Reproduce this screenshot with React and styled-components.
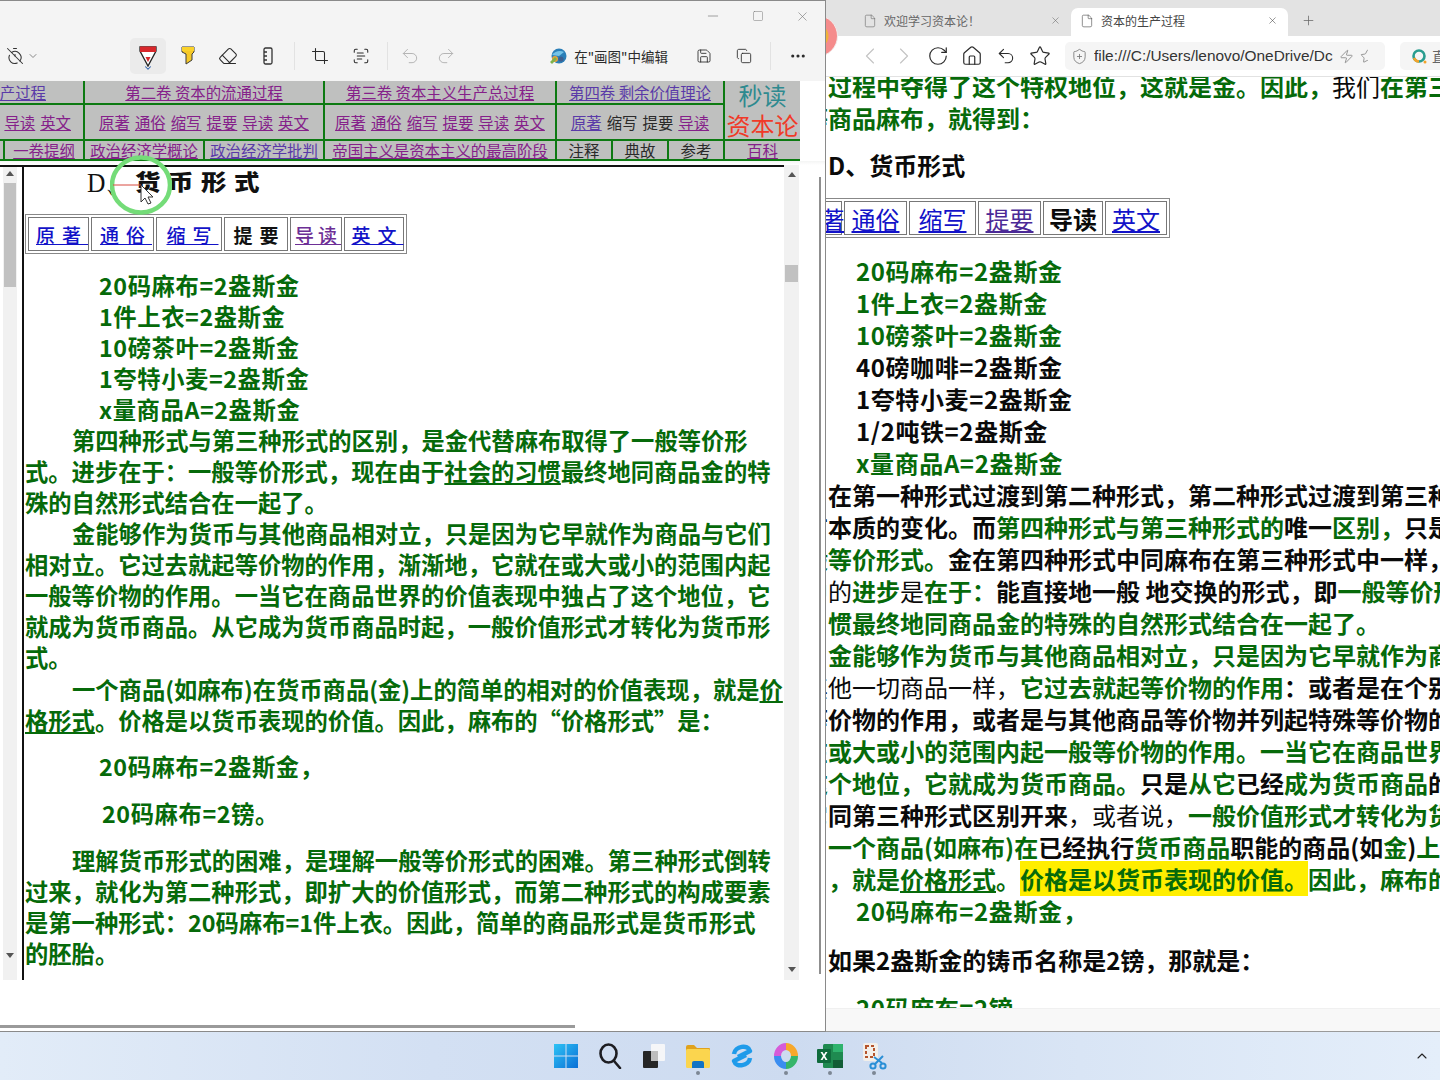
import React from "react"
import styled, { createGlobalStyle } from "styled-components"
import {
  TimerOff,
  ChevronDown,
  ChevronUp,
  ChevronLeft,
  ChevronRight,
  Eraser,
  Crop,
  ScanText,
  Undo2,
  Redo2,
  Save,
  Copy,
  Ellipsis,
  Minus,
  Square,
  X,
  File,
  Plus,
  RotateCw,
  House,
  Star,
  ShieldPlus,
  Zap,
  StarHalf,
} from "lucide-react"

const CJK = `"Noto Sans CJK SC", "Noto Sans", sans-serif`
const GREEN = "#066a0a"

const GlobalStyle = createGlobalStyle`
  html, body {
    margin: 0;
    padding: 0;
    background: #ffffff;
    overflow: hidden;
    font-family: ${CJK};
  }
`

const Desktop = styled.div`
  width: 1440px;
  height: 1080px;
  display: flex;
  flex-direction: column;
  overflow: hidden;
`

const Workspace = styled.div`
  height: 1032px;
  display: flex;
  flex: none;
`

/* snipping window on the left */
const SnipWindow = styled.section`
  position: relative;
  width: 826px;
  flex: none;
  display: flex;
  flex-direction: column;
  box-sizing: border-box;
  background: #ffffff;
  border-top: 1px solid #8a8a8a;
  border-right: 1px solid #8a8a8a;
  border-bottom: 1px solid #8a8a8a;
  z-index: 2;
`

const TitleBar = styled.header`
  height: 80px;
  flex: none;
  display: flex;
  flex-direction: column;
  background: #f4f4f4;
`

const CaptionRow = styled.div`
  height: 30px;
  display: flex;
  justify-content: flex-end;
  align-items: center;
  color: #777777;
`

const CaptionButton = styled.div`
  width: 45px;
  display: flex;
  justify-content: center;
  align-items: center;
`

const ToolRow = styled.div`
  height: 50px;
  display: flex;
  align-items: center;
  padding-right: 7px;
  color: #333333;
`

const TimerGroup = styled.div`
  width: 128px;
  flex: none;
  display: flex;
  align-items: center;
  gap: 3px;
  padding-left: 6px;
  box-sizing: border-box;
  color: #333;
`

const ToolSlot = styled.div`
  width: ${p => p.$w || 40}px;
  height: 36px;
  flex: none;
  position: relative;
  display: flex;
  align-items: center;
  justify-content: center;
  border-radius: 5px;
  margin-left: ${p => p.$ml || 0}px;
  background: ${p => (p.$active ? "#ebebeb" : "transparent")};
  color: ${p => (p.$muted ? "#b5b5b5" : "#2b2b2b")};
`

const ActiveMark = styled.div`
  position: absolute;
  bottom: 1px;
  left: 50%;
  margin-left: -5px;
  color: #2a5ca8;
  display: flex;
`

const ToolSep = styled.div`
  width: 1px;
  height: 28px;
  flex: none;
  margin-left: ${p => p.$ml || 6}px;
  background: #e2e2e2;
`

const EditInPaint = styled.div`
  margin-left: auto;
  display: flex;
  align-items: center;
  gap: 7px;
  font-size: 13.5px;
  color: #2b2b2b;
  white-space: nowrap;
`

const NavGrid = styled.nav`
  width: 800px;
  flex: none;
  display: grid;
  grid-template-columns: 3px 78px 118px 118px 230px 54px 54px 54px 75px;
  grid-template-rows: 22px 34px 18px;
  gap: 2px;
  padding-bottom: 2px;
  background: #0d7a12;
  overflow: hidden;
`

const NavCell = styled.div`
  grid-column: span ${p => p.$span || 1};
  background: #bfc0bf;
  display: flex;
  align-items: center;
  justify-content: ${p => p.$justify || "center"};
  padding-right: ${p => p.$pr || 0}px;
  gap: 5px;
  font-size: 15.4px;
  line-height: 18px;
  white-space: nowrap;
  overflow: hidden;
`

const BrandCell = styled(NavCell)`
  grid-row: span 2;
  flex-direction: column;
  gap: 2px;
`

const NavLink = styled.a`
  color: ${p => p.$color || "#85208a"};
  text-decoration: underline;
`

const NavPlain = styled.span`
  color: #2a2a2a;
`

const BrandText = styled.span`
  font-size: 24px;
  line-height: 28px;
  color: ${p => p.$color};
`

const FrameTop = styled.div`
  height: 4px;
  flex: none;
  background: linear-gradient(#f4f5f4, #ffffff);
`

const Frames = styled.div`
  width: 100%;
  height: 815px;
  flex: none;
  display: flex;
  position: relative;
`

const SideFrame = styled.div`
  width: 22px;
  flex: none;
  padding-left: 3px;
  box-sizing: border-box;
  border-top: 2px solid #111;
`

const ScrollTrack = styled.div`
  width: ${p => p.$w || 14}px;
  flex: none;
  height: 100%;
  background: #f1f1f1;
  display: flex;
  flex-direction: column;
  align-items: center;
`

const ArrowUp = styled.div`
  width: 0;
  height: 0;
  flex: none;
  margin-top: ${p => p.$mt}px;
  border-left: 4px solid transparent;
  border-right: 4px solid transparent;
  border-bottom: 5px solid #555;
`

const ArrowDown = styled(ArrowUp)`
  margin-top: ${p => p.$mt}px;
  border-bottom: 0;
  border-top: 5px solid #555;
`

const ScrollThumb = styled.div`
  width: ${p => p.$w || 12}px;
  height: ${p => p.$h}px;
  flex: none;
  margin-top: ${p => p.$mt}px;
  background: #c1c1c1;
`

const ReaderFrame = styled.article`
  flex: 1;
  min-width: 0;
  box-sizing: border-box;
  border-top: 2px solid #111;
  border-left: 2px solid #111;
  padding-left: 1px;
  overflow: hidden;
`

const FrameHeading = styled.h3`
  margin: 0 0 15px;
  padding-left: 62px;
  height: 32px;
  display: flex;
  align-items: center;
  color: #111;
  font-size: 25.5px;
  font-weight: 900;
  line-height: 30px;
`

const HeadingLatin = styled.span`
  font-family: "Liberation Serif", serif;
  font-weight: 400;
  width: 48px;
  flex: none;
  transform: scaleY(1.1);
`

const HeadingCjk = styled.span`
  letter-spacing: 7.5px;
  transform: translateY(-2px) scaleY(0.84);
`

const TabBox = styled.div`
  display: flex;
  width: fit-content;
  gap: 2px;
  padding: 2px;
  border: 1px solid #888;
  margin-left: ${p => p.$ml || 0}px;
`

const Tab = styled.div`
  width: ${p => p.$w}px;
  height: ${p => p.$h}px;
  flex: none;
  box-sizing: border-box;
  border: 1px solid #777;
  padding-left: ${p => p.$track || 0}px;
  display: flex;
  align-items: center;
  justify-content: center;
  white-space: nowrap;
  font-size: ${p => p.$size}px;
  letter-spacing: ${p => p.$track || 0}px;
  color: ${p => p.$color || "#1212c8"};
  text-decoration: ${p => (p.$current ? "none" : "underline")};
  font-weight: ${p => (p.$current ? 700 : p.$weight || 400)};
`

const TextLine = styled.p`
  margin: ${p => p.$mt || 0}px 0 0 ${p => p.$indent || 0}px;
  height: ${p => p.$lh}px;
  line-height: ${p => p.$lh}px;
  font-size: ${p => p.$size}px;
  font-weight: 700;
  white-space: nowrap;
  letter-spacing: ${p => p.$track || 0}px;
  color: ${p => p.$color || GREEN};
`

const Tone = styled.span`
  color: ${p => (p.$tone === "green" ? GREEN : "#0a0a0a")};
  font-weight: ${p => (p.$tone === "plain" ? 400 : 700)};
`

const Under = styled.span`
  text-decoration: underline;
`

const Mark = styled.span`
  background: #ffee00;
`

const OuterGutter = styled.div`
  width: 26px;
  flex: none;
  padding: 12px 0 0 20px;
  box-sizing: border-box;
`

const OuterThumb = styled.div`
  width: 2px;
  height: 797px;
  background: #8f8f8f;
`

const SnipFooter = styled.div`
  flex: 1;
  display: flex;
  align-items: flex-end;
  padding-bottom: 3px;
`

const FooterBar = styled.div`
  width: 575px;
  height: 3px;
  background: #9a9a9a;
`

const CursorMark = styled.div`
  position: absolute;
  left: 110px;
  top: 154px;
  width: 62px;
  height: 60px;
`

/* browser on the right */
const Browser = styled.section`
  flex: 1;
  min-width: 0;
  position: relative;
  display: flex;
  flex-direction: column;
  background: #fff;
  overflow: hidden;
`

const Avatar = styled.div`
  position: absolute;
  left: -30px;
  top: 15px;
  width: 42px;
  height: 42px;
  box-sizing: border-box;
  border-radius: 50%;
  background: radial-gradient(circle at 50% 50%, #f0b23a 0 11px, #f58b8b 12px);
  border: 1px solid #f2e8e8;
  z-index: 3;
`

const TabStrip = styled.div`
  height: 36px;
  flex: none;
  background: #e3e3e3;
  display: flex;
  align-items: flex-end;
  padding-left: 28px;
`

const BrowserTab = styled.div`
  width: ${p => p.$w}px;
  height: 28px;
  flex: none;
  box-sizing: border-box;
  padding: 0 10px 3px 9px;
  display: flex;
  align-items: center;
  gap: 7px;
  font-size: 12px;
  color: ${p => (p.$active ? "#444" : "#666")};
  background: ${p => (p.$active ? "#ffffff" : "transparent")};
  border-radius: 7px 7px 0 0;
`

const TabTitle = styled.span`
  flex: 1;
  white-space: nowrap;
`

const NewTab = styled.div`
  width: 40px;
  height: 28px;
  display: flex;
  align-items: center;
  justify-content: center;
  padding-bottom: 3px;
  box-sizing: border-box;
  color: #666;
`

const NavBar = styled.div`
  height: 41px;
  flex: none;
  box-sizing: border-box;
  border-bottom: 1px solid #e2e2e2;
  display: flex;
  align-items: center;
  padding-left: 27px;
  color: #333;
  position: relative;
  background: #fff;
  z-index: 1;
`

const NavIcon = styled.div`
  width: 34px;
  flex: none;
  display: flex;
  justify-content: center;
  color: ${p => (p.$muted ? "#c4c4c4" : "#2b2b2b")};
`

const AddressBox = styled.div`
  width: 320px;
  height: 28px;
  margin-left: 8px;
  flex: none;
  box-sizing: border-box;
  background: #f5f5f5;
  border-radius: 5px;
  display: flex;
  align-items: center;
  padding: 0 6px 0 6px;
  gap: 6px;
  color: #777;
`

const UrlText = styled.div`
  width: 239px;
  overflow: hidden;
  white-space: nowrap;
  font-family: "Liberation Sans", sans-serif;
  font-size: 15.4px;
  color: #333;
  flex: none;
`

const SearchBox = styled.div`
  flex: 1;
  height: 28px;
  margin-left: 15px;
  background: #f5f5f5;
  border-radius: 5px 0 0 5px;
  display: flex;
  align-items: center;
  gap: 5px;
  padding-left: 11px;
  font-size: 14px;
  color: #666;
  overflow: hidden;
  white-space: nowrap;
`

const Page = styled.main`
  flex: 1;
  min-height: 0;
  padding-left: 2px;
  overflow: hidden;
`

const StatusBar = styled.div`
  height: 24px;
  flex: none;
  background: #f8f8f8;
  border-top: 1px solid #f0f0f0;
  border-bottom: 1px solid #9a9a9a;
  box-sizing: border-box;
`

const PageLines = styled.div`
  margin-top: -7px;
`

const PageHeading = styled.h3`
  margin: 15px 0 17px 0;
  height: 32px;
  line-height: 32px;
  font-size: 24px;
  font-weight: 700;
  color: #0a0a0a;
`

/* taskbar */
const Taskbar = styled.footer`
  height: 48px;
  flex: none;
  display: flex;
  align-items: center;
  padding-left: 544px;
  padding-right: 10px;
  background: linear-gradient(90deg, #e2ecf8 0%, #d3e0f3 30%, #cddbf0 55%, #d9e5f5 75%, #e4eefa 100%);
`

const TaskSlot = styled.div`
  position: relative;
  width: 44px;
  height: 48px;
  flex: none;
  display: flex;
  align-items: center;
  justify-content: center;
  &::after {
    content: "";
    display: ${p => (p.$open ? "block" : "none")};
    position: absolute;
    left: 20px;
    bottom: 5px;
    width: 4px;
    height: 4px;
    border-radius: 50%;
    background: #7c8794;
  }
`

const TrayChevron = styled.div`
  margin-left: auto;
  display: flex;
  color: #222;
`

const PenIcon = () => (
  <svg width="18" height="22" viewBox="0 0 18 22">
    <path d="M1 2h16v4l-8 15L1 6z" fill="#fff" stroke="#222" strokeWidth="1.3" />
    <path d="M1 1.5h16V7H1z" fill="#d8272b" />
    <path d="M6.5 12h5L9 17z" fill="#d8272b" />
  </svg>
)

const HighlighterIcon = () => (
  <svg width="16" height="20" viewBox="0 0 16 20">
    <path d="M2 1h12v5l-2 2v6l-6 4V8L2 6z" fill="#f6c928" stroke="#3a3a3a" strokeWidth="1" />
    <path d="M2 1h12v4H2z" fill="#fbd22a" />
  </svg>
)

const RulerIcon = () => (
  <svg width="10" height="18" viewBox="0 0 10 18" fill="none" stroke="#333" strokeWidth="1.3">
    <rect x="1" y="1" width="8" height="16" rx="1.5" />
    <path d="M1 5h3M1 9h3M1 13h3" />
  </svg>
)

const PaintLogo = () => (
  <svg width="17" height="17" viewBox="0 0 17 17">
    <circle cx="9" cy="8" r="7.5" fill="#2b7fb8" />
    <path d="M2 7c3-4 8-5 12-3l-5 4z" fill="#75c4e8" />
    <circle cx="5" cy="11" r="3" fill="#e9a13b" />
    <circle cx="11" cy="11" r="2.6" fill="#3d5f8f" />
    <path d="M0 14l5-5 2 2-5 5z" fill="#7fb24a" />
  </svg>
)

const WindowsLogo = () => (
  <svg width="24" height="24" viewBox="0 0 24 24">
    <defs>
      <linearGradient id="winGrad" x1="0" y1="0" x2="1" y2="1">
        <stop offset="0" stopColor="#2ec3f5" />
        <stop offset="1" stopColor="#0a6fd6" />
      </linearGradient>
    </defs>
    <path d="M0 0h11.5v11.5H0zM12.5 0H24v11.5H12.5zM0 12.5h11.5V24H0zM12.5 12.5H24V24H12.5z" fill="url(#winGrad)" />
  </svg>
)

const SearchGlyph = () => (
  <svg width="24" height="26" viewBox="0 0 24 26" fill="none" stroke="#1d1d22" strokeWidth="2.6">
    <ellipse cx="10.5" cy="10.5" rx="8" ry="9" />
    <path d="M16 18l6 7" strokeLinecap="round" />
  </svg>
)

const TaskViewIcon = () => (
  <svg width="22" height="24" viewBox="0 0 22 24">
    <rect x="8" y="0" width="14" height="17" rx="1" fill="#f5f6f8" />
    <rect x="0" y="7" width="15" height="17" rx="1" fill="#262626" />
    <rect x="8" y="7" width="7" height="10" fill="#bdbdbd" />
  </svg>
)

const FolderIcon = () => (
  <svg width="26" height="24" viewBox="0 0 26 24">
    <path d="M1 3a2 2 0 0 1 2-2h6l3 3h12a1 1 0 0 1 1 1v3H1z" fill="#e0a21d" />
    <rect x="1" y="5" width="24" height="19" rx="1.5" fill="#fbd54e" />
    <path d="M7 24v-5a2 2 0 0 1 2-2h8a2 2 0 0 1 2 2v5z" fill="#1273c4" />
  </svg>
)

const EdgeSwirl = () => (
  <svg width="22" height="26" viewBox="0 0 22 26" fill="none" stroke="#1f9bea" strokeWidth="4.5" strokeLinejoin="round">
    <path d="M3 11C4 3 17 1 19 8L7 14" />
    <path d="M19 15C18 23 5 25 3 18L15 12" />
  </svg>
)

const ColorWheel = () => (
  <svg width="24" height="26" viewBox="0 0 24 26" fill="none" strokeWidth="7">
    <path d="M12 3.5A8.5 9.5 0 0 1 20.5 13" stroke="#f7a82c" />
    <path d="M20.5 13A8.5 9.5 0 0 1 12 22.5" stroke="#36b56a" />
    <path d="M12 22.5A8.5 9.5 0 0 1 3.5 13" stroke="#3a8df0" />
    <path d="M3.5 13A8.5 9.5 0 0 1 12 3.5" stroke="#d65bd8" />
  </svg>
)

const ExcelIcon = () => (
  <svg width="26" height="24" viewBox="0 0 26 24">
    <rect x="6" y="0" width="20" height="24" rx="1.5" fill="#1f8a50" />
    <rect x="16" y="0" width="10" height="8" fill="#2fb36d" />
    <rect x="16" y="16" width="10" height="8" fill="#125d36" />
    <rect x="0" y="5" width="14" height="14" rx="1" fill="#0f6b3c" />
    <path d="M3.5 8h2L7 10.6 8.5 8h2L8 12l2.500 4h-2L7 13.4 5.500 16h-2L6 12z" fill="#fff" />
  </svg>
)

const SnipIcon = () => (
  <svg width="26" height="28" viewBox="0 0 26 28" fill="none">
    <rect x="2" y="1" width="15" height="18" rx="2" fill="#f3efe9" />
    <rect x="5" y="4" width="8" height="11" stroke="#b5542c" strokeWidth="2" strokeDasharray="3 2" />
    <path d="M13 15l8 6M22 14l-8 8" stroke="#2a8fd6" strokeWidth="2" />
    <circle cx="12" cy="24" r="2.6" stroke="#2a8fd6" strokeWidth="2" />
    <circle cx="22" cy="24" r="2.6" stroke="#2a8fd6" strokeWidth="2" />
  </svg>
)

const SearchRing = () => (
  <svg width="16" height="16" viewBox="0 0 16 16" fill="none" style={{ flex: "none" }}>
    <circle cx="8" cy="8" r="5.5" stroke="#2a9d8f" strokeWidth="2.6" />
    <path d="M8 13.5A5.5 5.5 0 0 1 3 10" stroke="#f2a42c" strokeWidth="2.6" />
    <circle cx="14" cy="14" r="1.5" fill="#f2a42c" />
  </svg>
)

const readerTabs = [
  { label: "原著", w: 61 },
  { label: "通俗", w: 63 },
  { label: "缩写", w: 66 },
  { label: "提要", w: 64, current: true },
  { label: "导读", w: 52, color: "#6d2f96", track: 4 },
  { label: "英文", w: 60 },
]

const pageTabs = [
  { label: "原著", w: 43 },
  { label: "通俗", w: 63 },
  { label: "缩写", w: 67 },
  { label: "提要", w: 63, color: "#4b2a96" },
  { label: "导读", w: 60, current: true, color: "#0a0a0a" },
  { label: "英文", w: 62 },
]

const listLeft = [
  "20码麻布=2盎斯金",
  "1件上衣=2盎斯金",
  "10磅茶叶=2盎斯金",
  "1夸特小麦=2盎斯金",
  "x量商品A=2盎斯金",
]

const NavLinks = ({ names }) =>
  names.map(([name, color]) =>
    color === "plain" ? (
      <NavPlain key={name}>{name}</NavPlain>
    ) : (
      <NavLink key={name} $color={color}>
        {name}
      </NavLink>
    )
  )

const ReaderLine = props => <TextLine $size={23.3} $lh={31} {...props} />
const PageLine = props => <TextLine $size={24} $lh={32} {...props} />

const App = () => {
  return (
    <Desktop>
      <GlobalStyle />
      <Workspace>
        <SnipWindow>
          <TitleBar>
            <CaptionRow>
              <CaptionButton>
                <Minus size={16} strokeWidth={1} />
              </CaptionButton>
              <CaptionButton>
                <Square size={12} strokeWidth={1} />
              </CaptionButton>
              <CaptionButton>
                <X size={15} strokeWidth={1} />
              </CaptionButton>
            </CaptionRow>
            <ToolRow>
              <TimerGroup>
                <TimerOff size={18} strokeWidth={1.4} />
                <ChevronDown size={12} color="#888" />
              </TimerGroup>
              <ToolSlot $active $w={36} $ml={2}>
                <PenIcon />
                <ActiveMark>
                  <ChevronDown size={10} strokeWidth={2.5} />
                </ActiveMark>
              </ToolSlot>
              <ToolSlot $ml={2}>
                <HighlighterIcon />
              </ToolSlot>
              <ToolSlot>
                <Eraser size={20} strokeWidth={1.3} />
              </ToolSlot>
              <ToolSlot>
                <RulerIcon />
              </ToolSlot>
              <ToolSep />
              <ToolSlot $ml={5}>
                <Crop size={18} strokeWidth={1.4} />
              </ToolSlot>
              <ToolSlot $ml={1}>
                <ScanText size={18} strokeWidth={1.4} />
              </ToolSlot>
              <ToolSep />
              <ToolSlot $w={36} $ml={4} $muted>
                <Undo2 size={20} strokeWidth={1.2} />
              </ToolSlot>
              <ToolSlot $w={36} $muted>
                <Redo2 size={20} strokeWidth={1.2} />
              </ToolSlot>
              <EditInPaint>
                <PaintLogo />
                在"画图"中编辑
              </EditInPaint>
              <ToolSlot $ml={16}>
                <Save size={16} strokeWidth={1.3} />
              </ToolSlot>
              <ToolSlot>
                <Copy size={16} strokeWidth={1.3} />
              </ToolSlot>
              <ToolSep />
              <ToolSlot $ml={7}>
                <Ellipsis size={18} strokeWidth={2.2} />
              </ToolSlot>
            </ToolRow>
          </TitleBar>

          <NavGrid>
            <NavCell $span={2} $justify="flex-end" $pr={37}>
              <NavLink $color="#5a3aa8">产过程</NavLink>
            </NavCell>
            <NavCell $span={2}>
              <NavLink>第二卷 资本的流通过程</NavLink>
            </NavCell>
            <NavCell>
              <NavLink>第三卷 资本主义生产总过程</NavLink>
            </NavCell>
            <NavCell $span={3}>
              <NavLink $color="#5a3aa8">第四卷 剩余价值理论</NavLink>
            </NavCell>
            <BrandCell>
              <BrandText $color="#2f8a8f">秒读</BrandText>
              <BrandText $color="#f03a28">资本论</BrandText>
            </BrandCell>

            <NavCell $span={2} $justify="flex-end" $pr={12}>
              <NavLinks names={[["导读"], ["英文"]]} />
            </NavCell>
            <NavCell $span={2}>
              <NavLinks names={[["原著"], ["通俗"], ["缩写"], ["提要"], ["导读"], ["英文"]]} />
            </NavCell>
            <NavCell>
              <NavLinks names={[["原著"], ["通俗"], ["缩写"], ["提要"], ["导读"], ["英文"]]} />
            </NavCell>
            <NavCell $span={3}>
              <NavLinks names={[["原著", "#5a3aa8"], ["缩写", "plain"], ["提要", "plain"], ["导读"]]} />
            </NavCell>

            <NavCell />
            <NavCell>
              <NavLink>一卷提纲</NavLink>
            </NavCell>
            <NavCell>
              <NavLink>政治经济学概论</NavLink>
            </NavCell>
            <NavCell>
              <NavLink $color="#5a3aa8">政治经济学批判</NavLink>
            </NavCell>
            <NavCell>
              <NavLink>帝国主义是资本主义的最高阶段</NavLink>
            </NavCell>
            <NavCell>
              <NavPlain>注释</NavPlain>
            </NavCell>
            <NavCell>
              <NavPlain>典故</NavPlain>
            </NavCell>
            <NavCell>
              <NavPlain>参考</NavPlain>
            </NavCell>
            <NavCell>
              <NavLink>百科</NavLink>
            </NavCell>
          </NavGrid>
          <FrameTop />

          <Frames>
            <SideFrame>
              <ScrollTrack>
                <ArrowUp $mt={4} />
                <ScrollThumb $mt={7} $h={104} />
                <ArrowDown $mt={666} />
              </ScrollTrack>
            </SideFrame>
            <ReaderFrame>
              <FrameHeading>
                <HeadingLatin>D、</HeadingLatin>
                <HeadingCjk>货币形式</HeadingCjk>
              </FrameHeading>
              <TabBox>
                {readerTabs.map(t => (
                  <Tab
                    key={t.label}
                    $w={t.w}
                    $h={34}
                    $size={19}
                    $weight={500}
                    $track={t.track ?? 7}
                    $current={t.current}
                    $color={t.current ? "#111" : t.color}
                  >
                    {t.label}
                  </Tab>
                ))}
              </TabBox>
              {listLeft.map((line, i) => (
                <ReaderLine key={line} $indent={74} $mt={i === 0 ? 16 : 0} $track={0.6}>
                  {line}
                </ReaderLine>
              ))}
              <ReaderLine $indent={47}>第四种形式与第三种形式的区别，是金代替麻布取得了一般等价形</ReaderLine>
              <ReaderLine>
                式。进步在于：一般等价形式，现在由于<Under>社会的习惯</Under>最终地同商品金的特
              </ReaderLine>
              <ReaderLine>殊的自然形式结合在一起了。</ReaderLine>
              <ReaderLine $indent={47}>金能够作为货币与其他商品相对立，只是因为它早就作为商品与它们</ReaderLine>
              <ReaderLine>相对立。它过去就起等价物的作用，渐渐地，它就在或大或小的范围内起</ReaderLine>
              <ReaderLine>一般等价物的作用。一当它在商品世界的价值表现中独占了这个地位，它</ReaderLine>
              <ReaderLine>就成为货币商品。从它成为货币商品时起，一般价值形式才转化为货币形</ReaderLine>
              <ReaderLine>式。</ReaderLine>
              <ReaderLine $indent={47} $mt={1}>
                一个商品(如麻布)在货币商品(金)上的简单的相对的价值表现，就是<Under>价</Under>
              </ReaderLine>
              <ReaderLine>
                <Under>格形式</Under>。价格是以货币表现的价值。因此，麻布的“价格形式”是：
              </ReaderLine>
              <ReaderLine $indent={74} $mt={15} $track={0.6}>
                20码麻布=2盎斯金，
              </ReaderLine>
              <ReaderLine $indent={77} $mt={16} $track={0.6}>
                20码麻布=2镑。
              </ReaderLine>
              <ReaderLine $indent={47} $mt={16}>
                理解货币形式的困难，是理解一般等价形式的困难。第三种形式倒转
              </ReaderLine>
              <ReaderLine>过来，就化为第二种形式，即扩大的价值形式，而第二种形式的构成要素</ReaderLine>
              <ReaderLine>是第一种形式：20码麻布=1件上衣。因此，简单的商品形式是货币形式</ReaderLine>
              <ReaderLine>的胚胎。</ReaderLine>
            </ReaderFrame>
            <ScrollTrack $w={15}>
              <ArrowUp $mt={7} />
              <ScrollThumb $mt={88} $h={17} $w={13} />
              <ArrowDown $mt={685} />
            </ScrollTrack>
            <OuterGutter>
              <OuterThumb />
            </OuterGutter>
          </Frames>

          <SnipFooter>
            <FooterBar />
          </SnipFooter>

          <CursorMark>
            <svg width="62" height="60" viewBox="0 0 62 60" fill="none">
              <ellipse cx="31" cy="30" rx="29" ry="27.5" stroke="#74dc78" strokeWidth="4.5" />
              <path d="M3 30h28" stroke="#d84a40" strokeWidth="1" />
              <path d="M31 30v17l4-4 3 6 3-1-3-6h5z" fill="#fff" stroke="#333" strokeWidth="1" />
            </svg>
          </CursorMark>
        </SnipWindow>

        <Browser>
          <Avatar />
          <TabStrip>
            <BrowserTab $w={217}>
              <File size={14} strokeWidth={1} />
              <TabTitle>欢迎学习资本论！</TabTitle>
              <X size={11} strokeWidth={1.2} />
            </BrowserTab>
            <BrowserTab $w={217} $active>
              <File size={14} strokeWidth={1} />
              <TabTitle>资本的生产过程</TabTitle>
              <X size={11} strokeWidth={1.2} />
            </BrowserTab>
            <NewTab>
              <Plus size={15} strokeWidth={1.2} />
            </NewTab>
          </TabStrip>
          <NavBar>
            <NavIcon $muted>
              <ChevronLeft size={28} strokeWidth={1} />
            </NavIcon>
            <NavIcon $muted>
              <ChevronRight size={28} strokeWidth={1} />
            </NavIcon>
            <NavIcon>
              <RotateCw size={22} strokeWidth={1.3} />
            </NavIcon>
            <NavIcon>
              <House size={22} strokeWidth={1.3} />
            </NavIcon>
            <NavIcon>
              <Undo2 size={20} strokeWidth={1.3} />
            </NavIcon>
            <NavIcon>
              <Star size={22} strokeWidth={1.3} />
            </NavIcon>
            <AddressBox>
              <ShieldPlus size={17} strokeWidth={1.2} />
              <UrlText>file:///C:/Users/lenovo/OneDrive/Dc</UrlText>
              <Zap size={15} strokeWidth={1.2} />
              <StarHalf size={15} strokeWidth={1.2} />
            </AddressBox>
            <SearchBox>
              <SearchRing />直
            </SearchBox>
          </NavBar>
          <Page>
            <PageLines>
              <PageLine>
                过程中夺得了这个特权地位，这就是金。因此，<Tone $tone="plain">我们</Tone>在第三
              </PageLine>
              <PageLine $indent={-24}>等商品麻布，就得到：</PageLine>
            </PageLines>
            <PageHeading>D、货币形式</PageHeading>
            <TabBox $ml={-32}>
              {pageTabs.map(t => (
                <Tab
                  key={t.label}
                  $w={t.w}
                  $h={34}
                  $size={24}
                  $current={t.current}
                  $color={t.color}
                >
                  {t.label}
                </Tab>
              ))}
            </TabBox>
            <PageLine $indent={28} $mt={17} $track={0.6}>20码麻布=2盎斯金</PageLine>
            <PageLine $indent={28} $track={0.6}>1件上衣=2盎斯金</PageLine>
            <PageLine $indent={28} $track={0.6}>10磅茶叶=2盎斯金</PageLine>
            <PageLine $indent={28} $track={0.6} $color="#0a0a0a">40磅咖啡=2盎斯金</PageLine>
            <PageLine $indent={28} $track={0.6} $color="#0a0a0a">1夸特小麦=2盎斯金</PageLine>
            <PageLine $indent={28} $track={0.6} $color="#0a0a0a">1/2吨铁=2盎斯金</PageLine>
            <PageLine $indent={28} $track={0.6}>x量商品A=2盎斯金</PageLine>
            <PageLine $color="#0a0a0a">在第一种形式过渡到第二种形式，第二种形式过渡到第三种</PageLine>
            <PageLine $indent={-24} $color="#0a0a0a">
              有本质的变化。而<Tone $tone="green">第四种形式与第三种形式的</Tone>唯一<Tone $tone="green">区别，</Tone>只是
            </PageLine>
            <PageLine $indent={-24}>
              般等价形式。<Tone>金在第四种形式中同麻布在第三种形式中一样，</Tone>
            </PageLine>
            <PageLine $indent={-24}>
              <Tone $tone="plain">中的</Tone>进步<Tone $tone="plain">是</Tone>在于：<Tone>能直接地一般 地交换的形式，即</Tone>一般等价形
            </PageLine>
            <PageLine>惯最终地同商品金的特殊的自然形式结合在一起了。</PageLine>
            <PageLine>金能够作为货币与其他商品相对立，只是因为它早就作为商</PageLine>
            <PageLine $indent={-24}>
              <Tone $tone="plain">其他一切商品一样，</Tone>它过去就起等价物的作用<Tone>：或者是在个别</Tone>
            </PageLine>
            <PageLine $indent={-24} $color="#0a0a0a">等价物的作用，或者是与其他商品等价物并列起特殊等价物的</PageLine>
            <PageLine $indent={-24}>在或大或小的范围内起一般等价物的作用。一当它在商品世界</PageLine>
            <PageLine $indent={-24}>
              这个地位，它就成为货币商品。<Tone>只是</Tone>从它<Tone>已经</Tone>成为货币商品<Tone>的</Tone>
            </PageLine>
            <PageLine $indent={-24}>
              <Tone>它同第三种形式区别开来</Tone>
              <Tone $tone="plain">，或者说，</Tone>一般价值形式才转化为货
            </PageLine>
            <PageLine>
              一个商品(如麻布)在<Tone>已经执行</Tone>货币商品<Tone>职能的商品(如</Tone>金<Tone>)</Tone>上
            </PageLine>
            <PageLine>
              ，就是<Under>价格形式</Under>。<Mark>价格是以货币表现的价值。</Mark>因此，麻布的
            </PageLine>
            <PageLine $indent={28} $track={0.6}>20码麻布=2盎斯金，</PageLine>
            <PageLine $mt={17} $color="#0a0a0a">如果2盎斯金的铸币名称是2镑，那就是：</PageLine>
            <PageLine $indent={28} $mt={16} $track={0.6}>20码麻布=2镑</PageLine>
          </Page>
          <StatusBar />
        </Browser>
      </Workspace>

      <Taskbar>
        <TaskSlot>
          <WindowsLogo />
        </TaskSlot>
        <TaskSlot>
          <SearchGlyph />
        </TaskSlot>
        <TaskSlot>
          <TaskViewIcon />
        </TaskSlot>
        <TaskSlot $open>
          <FolderIcon />
        </TaskSlot>
        <TaskSlot>
          <EdgeSwirl />
        </TaskSlot>
        <TaskSlot $open>
          <ColorWheel />
        </TaskSlot>
        <TaskSlot $open>
          <ExcelIcon />
        </TaskSlot>
        <TaskSlot $open>
          <SnipIcon />
        </TaskSlot>
        <TrayChevron>
          <ChevronUp size={16} strokeWidth={1.6} />
        </TrayChevron>
      </Taskbar>
    </Desktop>
  )
}

export default App
